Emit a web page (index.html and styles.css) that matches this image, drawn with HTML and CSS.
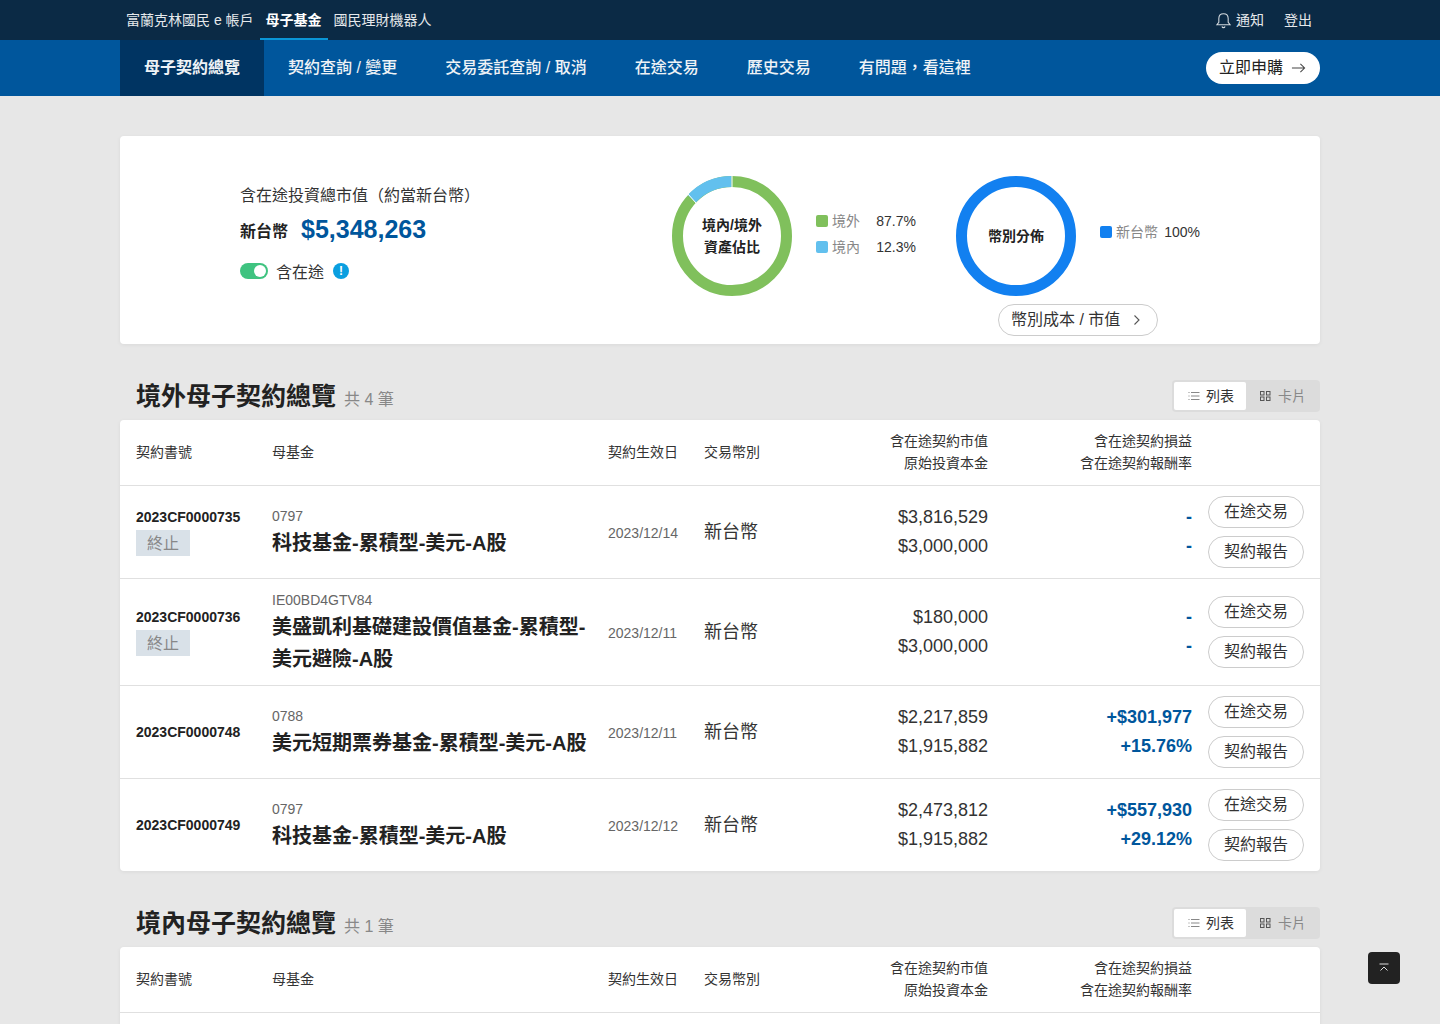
FILE: index.html
```html
<!DOCTYPE html>
<html lang="zh-Hant">
<head>
<meta charset="utf-8">
<title>母子契約總覽</title>
<link rel="stylesheet" href="styles.css">
</head>
<body>
<div class="page">
  <header class="topbar">
    <div class="topbar-inner">
      <nav class="top-tabs">
        <a class="top-tab">富蘭克林國民 e 帳戶</a>
        <a class="top-tab is-active">母子基金</a>
        <a class="top-tab">國民理財機器人</a>
      </nav>
      <div class="top-actions">
        <a class="top-action">
          <svg class="bell" viewBox="0 0 16 16" fill="none" stroke="#d5dbe0" stroke-width="1"><path d="M8 1.600c-2.800 0-4.400 2-4.400 4.600v3.400L1.800 12h12.400l-1.800-2.400V6.200c0-2.600-1.600-4.600-4.400-4.600z"/><path d="M6.500 13.600c.3.800.8 1.100 1.500 1.100s1.200-.3 1.500-1.100"/></svg>
          通知</a>
        <a class="top-action">登出</a>
      </div>
    </div>
  </header>
  <div class="navbar">
    <div class="navbar-inner">
      <nav class="main-tabs">
        <a class="main-tab is-active">母子契約總覽</a>
        <a class="main-tab">契約查詢 / 變更</a>
        <a class="main-tab">交易委託查詢 / 取消</a>
        <a class="main-tab">在途交易</a>
        <a class="main-tab">歷史交易</a>
        <a class="main-tab">有問題，看這裡</a>
      </nav>
      <a class="apply-btn">立即申購
        <svg class="apply-arrow" viewBox="0 0 16 12" fill="none" stroke="#444" stroke-width="1.100"><path d="M1 6h13.500M10 1.500 14.500 6 10 10.500"/></svg>
      </a>
    </div>
  </div>

  <main class="content">
    <section class="summary">
      <div class="summary-left">
        <div class="summary-label">含在途投資總市值（約當新台幣）</div>
        <div class="summary-total"><span class="summary-cur">新台幣</span><span class="summary-value">$5,348,263</span></div>
        <div class="summary-toggle">
          <span class="switch"><span class="switch-knob"></span></span>
          <span>含在途</span>
          <span class="info-dot">!</span>
        </div>
      </div>
      <div class="chart-group chart-region">
        <div class="donut">
          <svg viewBox="0 0 120 120">
            <circle cx="60" cy="60" r="54.500" fill="none" stroke="#80c05c" stroke-width="11"/>
            <path d="M59.500 5.500A54.500 54.500 0 0 0 19.800 22.800" fill="none" stroke="#62c0ee" stroke-width="11"/>
            <path d="M60 0V11M16 18l8 9" stroke="#fff" stroke-width="1"/>
          </svg>
          <div class="donut-label">境內/境外<br>資產佔比</div>
        </div>
        <div class="legend">
          <div class="legend-row"><i class="swatch swatch-green"></i><span class="legend-name">境外</span><span class="legend-num">87.7%</span></div>
          <div class="legend-row"><i class="swatch swatch-sky"></i><span class="legend-name">境內</span><span class="legend-num">12.3%</span></div>
        </div>
      </div>
      <div class="chart-column">
        <div class="chart-group">
          <div class="donut">
            <svg viewBox="0 0 120 120"><circle cx="60" cy="60" r="54.500" fill="none" stroke="#1280f0" stroke-width="11"/></svg>
            <div class="donut-label">幣別分佈</div>
          </div>
          <div class="legend">
            <div class="legend-row legend-row-tight"><i class="swatch swatch-blue"></i><span class="legend-name">新台幣</span><span class="legend-num">100%</span></div>
          </div>
        </div>
        <a class="cost-btn">幣別成本 / 市值
          <svg class="chev" viewBox="0 0 8 12" fill="none" stroke="#555" stroke-width="1.100"><path d="M1.500 1.500 6 6l-4.500 4.500"/></svg>
        </a>
      </div>
    </section>

    <section class="block">
      <div class="block-head">
        <h2 class="block-title">境外母子契約總覽<small class="block-count">共 4 筆</small></h2>
        <div class="view-switch">
          <span class="view-opt is-active">
            <svg class="view-icon" viewBox="0 0 12 12" fill="none" stroke="#888" stroke-width="1"><path d="M3 2.500h8.500M3 6h8.500M3 9.500h8.500M.5 2.500h1M.5 6h1M.5 9.500h1"/></svg><span class="view-text">列表</span></span>
          <span class="view-opt">
            <svg class="view-icon" viewBox="0 0 12 12" fill="none" stroke="#555" stroke-width="1"><rect x=".5" y="1.500" width="3.500" height="3.500"/><rect x="6.500" y="1.500" width="3.500" height="3.500"/><rect x=".5" y="7" width="3.500" height="3.500"/><rect x="6.500" y="7" width="3.500" height="3.500"/></svg><span class="view-text">卡片</span></span>
        </div>
      </div>
      <div class="table">
        <div class="row row-head">
          <div>契約書號</div><div>母基金</div><div>契約生效日</div><div>交易幣別</div>
          <div class="right">含在途契約市值<br>原始投資本金</div>
          <div class="right">含在途契約損益<br>含在途契約報酬率</div>
          <div></div>
        </div>
        <div class="row">
          <div><div class="contract">2023CF0000735</div><span class="badge">終止</span></div>
          <div><div class="code">0797</div><div class="fund">科技基金-累積型-美元-A股</div></div>
          <div class="date">2023/12/14</div><div class="cur">新台幣</div>
          <div class="nums right"><div>$3,816,529</div><div>$3,000,000</div></div>
          <div class="nums gain right"><div>-</div><div>-</div></div>
          <div class="btns"><a class="pill">在途交易</a><a class="pill">契約報告</a></div>
        </div>
        <div class="row">
          <div><div class="contract">2023CF0000736</div><span class="badge">終止</span></div>
          <div><div class="code">IE00BD4GTV84</div><div class="fund">美盛凱利基礎建設價值基金-累積型-美元避險-A股</div></div>
          <div class="date">2023/12/11</div><div class="cur">新台幣</div>
          <div class="nums right"><div>$180,000</div><div>$3,000,000</div></div>
          <div class="nums gain right"><div>-</div><div>-</div></div>
          <div class="btns"><a class="pill">在途交易</a><a class="pill">契約報告</a></div>
        </div>
        <div class="row">
          <div><div class="contract">2023CF0000748</div></div>
          <div><div class="code">0788</div><div class="fund">美元短期票券基金-累積型-美元-A股</div></div>
          <div class="date">2023/12/11</div><div class="cur">新台幣</div>
          <div class="nums right"><div>$2,217,859</div><div>$1,915,882</div></div>
          <div class="nums gain right"><div>+$301,977</div><div>+15.76%</div></div>
          <div class="btns"><a class="pill">在途交易</a><a class="pill">契約報告</a></div>
        </div>
        <div class="row">
          <div><div class="contract">2023CF0000749</div></div>
          <div><div class="code">0797</div><div class="fund">科技基金-累積型-美元-A股</div></div>
          <div class="date">2023/12/12</div><div class="cur">新台幣</div>
          <div class="nums right"><div>$2,473,812</div><div>$1,915,882</div></div>
          <div class="nums gain right"><div>+$557,930</div><div>+29.12%</div></div>
          <div class="btns"><a class="pill">在途交易</a><a class="pill">契約報告</a></div>
        </div>
      </div>
    </section>

    <section class="block">
      <div class="block-head">
        <h2 class="block-title">境內母子契約總覽<small class="block-count">共 1 筆</small></h2>
        <div class="view-switch">
          <span class="view-opt is-active">
            <svg class="view-icon" viewBox="0 0 12 12" fill="none" stroke="#888" stroke-width="1"><path d="M3 2.500h8.500M3 6h8.500M3 9.500h8.500M.5 2.500h1M.5 6h1M.5 9.500h1"/></svg><span class="view-text">列表</span></span>
          <span class="view-opt">
            <svg class="view-icon" viewBox="0 0 12 12" fill="none" stroke="#555" stroke-width="1"><rect x=".5" y="1.500" width="3.500" height="3.500"/><rect x="6.500" y="1.500" width="3.500" height="3.500"/><rect x=".5" y="7" width="3.500" height="3.500"/><rect x="6.500" y="7" width="3.500" height="3.500"/></svg><span class="view-text">卡片</span></span>
        </div>
      </div>
      <div class="table">
        <div class="row row-head">
          <div>契約書號</div><div>母基金</div><div>契約生效日</div><div>交易幣別</div>
          <div class="right">含在途契約市值<br>原始投資本金</div>
          <div class="right">含在途契約損益<br>含在途契約報酬率</div>
          <div></div>
        </div>
        <div class="row row-blank"></div>
      </div>
    </section>
  </main>

  <a class="to-top">
    <svg viewBox="0 0 12 12" fill="none" stroke="#ddd" stroke-width="1"><path d="M1.500 2h9M2.500 8.500 6 5l3.500 3.500"/></svg>
  </a>
</div>
</body>
</html>
```
FILE: styles.css
```css
* { box-sizing: border-box; }
html, body { margin: 0; padding: 0; }
body {
  background: #e7e7e7;
  color: #222;
  font-family: "Liberation Sans", "Noto Sans CJK TC", sans-serif;
  font-size: 16px;
}
.page { height: 1024px; overflow: hidden; }
a { color: inherit; text-decoration: none; }

.topbar { height: 40px; background: #0b2a45; color: #e6e9ec; font-size: 14px; }
.topbar-inner { width: 1200px; height: 100%; margin: 0 auto; display: flex; justify-content: space-between; }
.top-tabs { display: flex; }
.top-tab { display: flex; align-items: center; padding: 0 6px; height: 40px; border-bottom: 2px solid transparent; }
.top-tab.is-active { font-weight: 700; border-bottom-color: #0a95d6; color: #fff; }
.top-actions { display: flex; align-items: center; gap: 20px; padding: 0 8px 2px 0; }
.top-action { display: flex; align-items: center; gap: 4px; }
.bell { width: 17px; height: 17px; margin-top: 2px; }

.navbar { height: 56px; background: #00569c; color: #eef2f6; }
.navbar-inner { width: 1200px; height: 100%; margin: 0 auto; display: flex; justify-content: space-between; align-items: center; }
.main-tabs { display: flex; height: 100%; }
.main-tab { display: flex; align-items: center; padding: 0 24px 4px; font-size: 16px; font-weight: 500; }
.main-tab.is-active { background: #003462; font-weight: 700; }
.apply-btn {
  display: flex; align-items: center; gap: 8px;
  height: 32px; width: 114px; padding: 0 0 4px 13px;
  background: #fff; color: #222; border-radius: 16px;
}
.apply-arrow { width: 15px; height: 12px; margin-top: 4px; }

.content { width: 1200px; margin: 40px auto 0; }
.summary {
  display: flex; height: 208px; padding-top: 40px; padding-left: 120px;
  background: #fff; border-radius: 4px;
  box-shadow: 0 1px 4px rgba(0,0,0,.06);
}
.summary-left { width: 432px; padding-top: 9px; }
.summary-label { line-height: 22px; color: #333; }
.summary-total { display: flex; align-items: center; gap: 13px; margin-top: 4px; height: 36px; }
.summary-cur { font-weight: 700; margin-top: 2px; }
.summary-value { font-size: 25px; font-weight: 700; color: #00569c; }
.summary-toggle { display: flex; align-items: center; gap: 8px; margin-top: 12px; height: 24px; color: #333; }
.switch { position: relative; display: block; width: 28px; height: 16px; border-radius: 8px; background: #3fc380; }
.switch-knob { position: absolute; top: 2px; right: 2px; width: 12px; height: 12px; border-radius: 50%; background: #fff; }
.info-dot {
  width: 16px; height: 16px; margin-left: 1px; border-radius: 50%; background: #0a9fe0;
  color: #fff; font-size: 12px; font-weight: 700; line-height: 16px; text-align: center;
}
.chart-group { display: flex; align-items: flex-start; }
.chart-region { width: 284px; }
.chart-column { display: flex; flex-direction: column; align-items: center; width: 244px; }
.donut { position: relative; width: 120px; height: 120px; flex: none; }
.donut svg { display: block; width: 120px; height: 120px; }
.donut-label {
  position: absolute; inset: 0; display: flex; align-items: center; justify-content: center;
  text-align: center; font-size: 14px; font-weight: 700; line-height: 22px; color: #222;
}
.legend { margin-left: 24px; padding-top: 32px; font-size: 14px; }
.legend-row { display: flex; align-items: center; width: 100px; height: 26px; }
.legend-row-tight { margin-top: 11px; }
.swatch { display: block; width: 12px; height: 12px; border-radius: 2px; margin-right: 4px; flex: none; }
.swatch-green { background: #80c05c; }
.swatch-sky { background: #62c0ee; }
.swatch-blue { background: #1280f0; }
.legend-name { color: #888; padding-bottom: 2px; }
.legend-num { margin-left: auto; color: #333; }
.cost-btn {
  display: flex; align-items: center; justify-content: space-between;
  width: 160px; height: 32px; margin-top: 8px; padding: 0 16px 4px 12px;
  border: 1px solid #ccc; border-radius: 16px; color: #333;
}
.chev { width: 8px; height: 12px; margin-top: 4px; }

.block { margin-top: 36px; }
.block-head { display: flex; align-items: center; justify-content: space-between; height: 32px; margin-bottom: 8px; padding-left: 16px; }
.block-title { margin: 0 0 4px; font-size: 25px; font-weight: 700; color: #222; display: flex; align-items: baseline; }
.block-count { margin-left: 8px; font-size: 16px; font-weight: 400; color: #888; }
.view-switch { display: flex; height: 32px; padding: 2px; background: #dcdcdc; border-radius: 4px; font-size: 14px; }
.view-opt { display: flex; align-items: center; gap: 6px; width: 72px; padding-left: 14px; color: #888; border-radius: 2px; }
.view-opt.is-active { background: #fff; color: #333; }
.view-icon { width: 12px; height: 12px; }
.view-text { padding-bottom: 2px; }

.table { background: #fff; border-radius: 4px; box-shadow: 0 1px 4px rgba(0,0,0,.06); }
.row {
  display: grid;
  grid-template-columns: 136px 336px 96px 96px 188px 204px 96px;
  align-items: center;
  padding: 10px 16px;
  border-bottom: 1px solid #e0e0e0;
}
.row:last-child { border-bottom: 0; }
.row > :last-child:not(.right) { margin-left: 16px; }
.row-head { height: 66px; padding-top: 0; padding-bottom: 2px; font-size: 14px; line-height: 22px; color: #333; }
.row-blank { height: 60px; }
.right { text-align: right; }
.contract { font-size: 14px; font-weight: 700; line-height: 22px; color: #222; }
.badge { display: block; width: 54px; height: 26px; margin: 2px 0; background: #d9e1e8; color: #888; line-height: 28px; text-align: center; }
.code { font-size: 14px; line-height: 22px; color: #666; }
.fund { font-size: 20px; font-weight: 700; line-height: 32px; color: #222; padding-right: 16px; }
.date { font-size: 14px; color: #666; padding-top: 1px; }
.cur { font-size: 18px; color: #333; padding-bottom: 4px; }
.nums { font-size: 18px; line-height: 29px; color: #333; }
.gain { font-weight: 700; color: #00569c; }
.btns { display: flex; flex-direction: column; gap: 8px; }
.pill {
  display: flex; align-items: center; justify-content: center;
  width: 96px; height: 32px; padding-bottom: 4px;
  border: 1px solid #ccc; border-radius: 16px; color: #333;
}
.to-top {
  position: fixed; left: 1368px; top: 952px;
  display: flex; align-items: center; justify-content: center;
  width: 32px; height: 32px; background: #222; border-radius: 4px;
}
.to-top svg { width: 12px; height: 12px; }
```
